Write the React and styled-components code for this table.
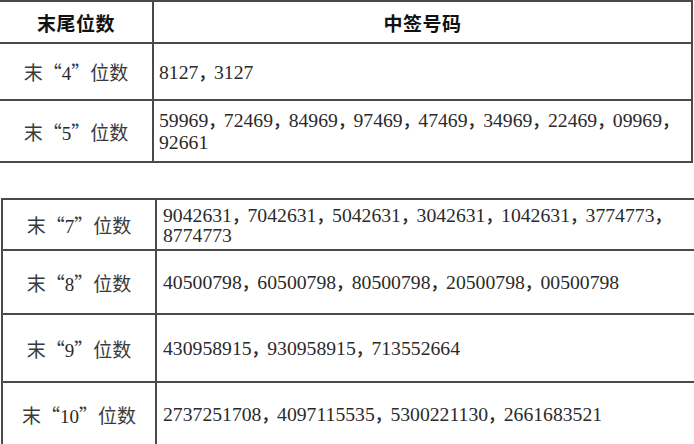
import React from "react";
import styled, { createGlobalStyle } from "styled-components";

const Global = createGlobalStyle`
  html, body { margin: 0; padding: 0; background: #fff; }
  body { overflow: hidden; }
`;

const Page = styled.div`
  width: 694px;
  height: 444px;
  overflow: hidden;
  background: #fff;
  display: flex;
  flex-direction: column;
`;

const Table = styled.table`
  border-collapse: collapse;
  table-layout: fixed;
  width: ${(p) => p.$width}px;
  margin: ${(p) => p.$margin};
  flex-shrink: 0;
  td, th {
    border: 2px solid #4a4a4a;
    padding: 0;
    vertical-align: middle;
  }
`;

const Row = styled.tr`
  height: ${(p) => p.$h}px;
`;

const HeadCell = styled.th`
  width: ${(p) => (p.$w ? `${p.$w}px` : "auto")};
  font-family: "Noto Sans CJK SC", sans-serif;
  font-weight: 700;
  font-size: 19px;
  color: #111;
  text-align: center;
  letter-spacing: 0.5px;
`;

const LabelCell = styled.td`
  width: ${(p) => p.$w}px;
  font-family: "Noto Sans CJK SC", sans-serif;
  font-size: 19px;
  color: #3a3a3a;
  text-align: center;
  white-space: nowrap;
`;

const Digit = styled.span`
  font-family: "Liberation Serif", serif;
  color: #2a2a2a;
`;

const NumCell = styled.td`
  font-family: "Liberation Serif", "Noto Sans CJK SC", serif;
  font-size: 19.7px;
  color: #2a2a2a;
  text-align: left;
  padding-left: ${(p) => p.$pad}px !important;
  line-height: ${(p) => p.$lh}px;
  white-space: nowrap;
`;

const Comma = styled.span`
  font-family: "Noto Sans CJK SC", sans-serif;
  font-size: 15.6px;
  font-weight: 700;
`;

const Line = styled.div``;

const Label = ({ n, w }) => (
  <LabelCell $w={w}>
    末“<Digit>{n}</Digit>”位数
  </LabelCell>
);

const NumLine = ({ text }) => {
  const parts = text.split("，");
  return (
    <Line>
      {parts.map((p, i) => (
        <React.Fragment key={i}>
          {p}
          {i < parts.length - 1 && <Comma>，</Comma>}
        </React.Fragment>
      ))}
    </Line>
  );
};

const Nums = ({ lines, pad, lh }) => (
  <NumCell $pad={pad} $lh={lh}>
    {lines.map((l, i) => (
      <NumLine key={i} text={l} />
    ))}
  </NumCell>
);

const table1 = [
  { n: "4", h: 57, lines: ["8127，3127"] },
  {
    n: "5",
    h: 62,
    lines: ["59969，72469，84969，97469，47469，34969，22469，09969，", "92661"],
  },
];

const table2 = [
  {
    n: "7",
    h: 51,
    lines: ["9042631，7042631，5042631，3042631，1042631，3774773，", "8774773"],
  },
  { n: "8", h: 64, lines: ["40500798，60500798，80500798，20500798，00500798"] },
  { n: "9", h: 68, lines: ["430958915，930958915，713552664"] },
  { n: "10", h: 64, lines: ["2737251708，4097115535，5300221130，2661683521"] },
];

export default function App() {
  return (
    <>
      <Global />
      <Page>
        <Table $width={695} $margin="0 0 0 -2px">
          <tbody>
            <Row $h={42}>
              <HeadCell $w={152}>末尾位数</HeadCell>
              <HeadCell>中签号码</HeadCell>
            </Row>
            {table1.map((r) => (
              <Row key={r.n} $h={r.h}>
                <Label n={r.n} w={152} />
                <Nums lines={r.lines} pad={5} lh={22} />
              </Row>
            ))}
          </tbody>
        </Table>
        <Table $width={710} $margin="35px 0 0 1px">
          <tbody>
            {table2.map((r) => (
              <Row key={r.n} $h={r.h}>
                <Label n={r.n} w={152} />
                <Nums lines={r.lines} pad={6} lh={20} />
              </Row>
            ))}
          </tbody>
        </Table>
      </Page>
    </>
  );
}
